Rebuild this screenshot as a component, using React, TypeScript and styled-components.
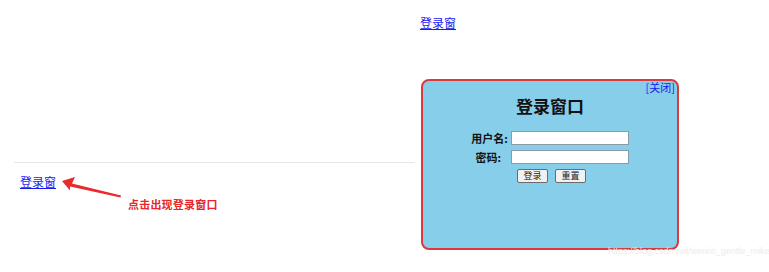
import React from "react";
import styled, { createGlobalStyle } from "styled-components";

const Global = createGlobalStyle`
  html, body { margin: 0; padding: 0; background: #ffffff; }
  body { font-family: "Noto Sans CJK SC", "Noto Sans", sans-serif; }
`;

const Page = styled.div`
  position: relative;
  width: 769px;
  height: 272px;
  display: grid;
  grid-template-columns: 415px 1fr;
  overflow: hidden;
`;

const LeftPane = styled.div`
  position: relative;
  padding-top: 162px;
`;

const Rule = styled.div`
  margin-left: 14px;
  height: 1px;
  background: #e6e6e6;
`;

const LinkText = styled.a<{ $ml: number; $mt: number }>`
  display: inline-block;
  margin-left: ${(p) => p.$ml}px;
  margin-top: ${(p) => p.$mt}px;
  font-size: 12px;
  line-height: 14px;
  color: #1a1aee;
  text-decoration: underline;
  cursor: pointer;
`;

const Note = styled.div`
  margin-left: 128px;
  margin-top: 6px;
  font-size: 11px;
  line-height: 13px;
  font-weight: 700;
  color: #e8262a;
  letter-spacing: 0.2px;
`;

const ArrowSvg = styled.svg`
  position: absolute;
  left: 55px;
  top: 172px;
  width: 75px;
  height: 30px;
`;

const RightPane = styled.div`
  display: flex;
  flex-direction: column;
  align-items: flex-start;
  padding-top: 16px;
`;

const Dialog = styled.div`
  margin-top: 49px;
  margin-left: 6px;
  box-sizing: border-box;
  width: 258px;
  height: 171px;
  border: 2px solid #d93a3e;
  border-radius: 8px;
  background: #87ceeb;
  display: flex;
  flex-direction: column;
  align-items: center;
`;

const CloseRow = styled.div`
  align-self: stretch;
  display: flex;
  justify-content: flex-end;
  padding-right: 2px;
`;

const CloseLink = styled.a`
  font-size: 11px;
  line-height: 12px;
  color: #1a1aee;
  text-decoration: none;
  cursor: pointer;
`;

const Title = styled.h2`
  margin: 3px 0 0 0;
  font-size: 17px;
  line-height: 20px;
  font-weight: 700;
  color: #111;
`;

const Form = styled.div`
  margin-top: 15px;
  display: grid;
  grid-template-columns: auto 118px;
  column-gap: 3px;
  row-gap: 5px;
  align-items: center;
`;

const Label = styled.span`
  justify-self: center;
  font-size: 11px;
  line-height: 14px;
  font-weight: 700;
  color: #111;
  white-space: pre;
`;

const Input = styled.input`
  box-sizing: border-box;
  width: 118px;
  height: 14px;
  margin: 0;
  padding: 0 2px;
  border: 1px solid #8a9aa6;
  background: #ffffff;
  outline: none;
`;

const ButtonRow = styled.div`
  grid-column: 1 / -1;
  justify-self: center;
  display: flex;
  gap: 7px;
  margin-left: 3px;
`;

const Btn = styled.button`
  box-sizing: border-box;
  width: 31px;
  height: 14px;
  padding: 0;
  margin: 0;
  border: 1px solid #6b6b6b;
  border-radius: 2px;
  background: #f1f1f1;
  font-family: "Noto Sans CJK SC", sans-serif;
  font-size: 9px;
  line-height: 12px;
  color: #222;
`;

const Watermark = styled.div`
  position: absolute;
  left: 608px;
  top: 246px;
  font-family: "Liberation Sans", sans-serif;
  font-size: 9px;
  color: #ececec;
  white-space: nowrap;
`;

export default function App() {
  return (
    <>
      <Global />
      <Page>
        <LeftPane>
          <Rule />
          <LinkText $ml={20} $mt={12}>登录窗</LinkText>
          <Note>点击出现登录窗口</Note>
          <ArrowSvg viewBox="55 172 75 30">
            <polygon
              points="62,181 75,177 72,183.5 121,195.5 120.5,197.5 70,186.5 70,190.5"
              fill="#ea2a2c"
            />
          </ArrowSvg>
        </LeftPane>
        <RightPane>
          <LinkText $ml={5} $mt={0}>登录窗</LinkText>
          <Dialog>
            <CloseRow>
              <CloseLink>[关闭]</CloseLink>
            </CloseRow>
            <Title>登录窗口</Title>
            <Form>
              <Label>用户名:</Label>
              <Input type="text" />
              <Label>{"密码: "}</Label>
              <Input type="password" />
              <ButtonRow>
                <Btn>登录</Btn>
                <Btn>重置</Btn>
              </ButtonRow>
            </Form>
          </Dialog>
        </RightPane>
        <Watermark>https://blog.csdn.net/weixin_gentle_mike</Watermark>
      </Page>
    </>
  );
}
